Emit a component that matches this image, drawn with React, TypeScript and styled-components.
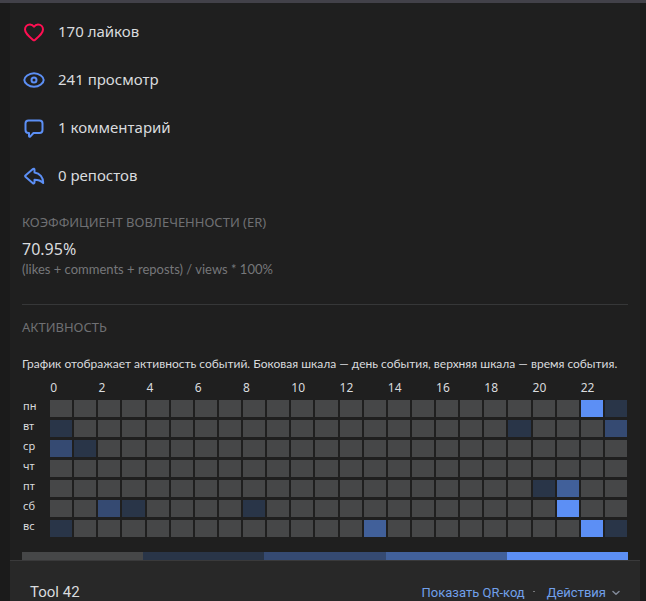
import React from "react";
import styled, { createGlobalStyle } from "styled-components";

const GlobalStyle = createGlobalStyle`
  * { box-sizing: border-box; }
  body {
    margin: 0;
    background: #1b1b1b;
    color: #d9dbde;
    font-family: "Noto Sans", sans-serif;
  }
`;

const LEVELS = ["#464748", "#293548", "#354a72", "#41609a", "#5c8ff5"];

const Page = styled.div`
  min-height: 100vh;
  display: flex;
  flex-direction: column;
  padding: 0 6px 0 10px;
  border-top: 3px solid #424149;
`;

const Panel = styled.main`
  flex: none;
  background: #1f1f1f;
  padding: 5px 12px 0;
`;

const StatList = styled.ul`
  list-style: none;
  margin: 0;
  padding: 0;
`;

const Stat = styled.li`
  display: flex;
  align-items: center;
  gap: 12px;
  height: 48px;
  font-size: 15px;
`;

const StatText = styled.span`
  padding-bottom: 2px;
`;

const StatIcon = styled.svg<{ $tone: string }>`
  flex: none;
  width: 24px;
  height: 24px;
  fill: none;
  stroke: ${(p) => p.$tone};
  stroke-width: 2;
  stroke-linecap: round;
  stroke-linejoin: round;
`;

const SectionTitle = styled.h2`
  margin: 0;
  color: #6f7073;
  font-size: 13px;
  font-weight: 400;
  line-height: 16px;
  text-transform: uppercase;
`;

const Rate = styled.section`
  padding: 14px 0 27px;
  border-bottom: 1px solid #363738;
`;

const RateValue = styled.div`
  margin-top: 7px;
  font-size: 16px;
  line-height: 24px;
`;

const RateFormula = styled.div`
  color: #76777a;
  font-family: Lato, sans-serif;
  font-size: 13px;
  line-height: 16px;
`;

const Activity = styled.section`
  padding-top: 14px;
`;

const Description = styled.p`
  margin: 21px 0 7px;
  font-family: Lato, sans-serif;
  font-size: 12px;
  line-height: 16px;
`;

const HeatTable = styled.table`
  display: grid;
  grid-template-columns: minmax(0, 13fr) repeat(24, minmax(0, 11fr));
  gap: 3px 2px;
  padding-right: 1px;

  thead, tbody, tr { display: contents; }
`;

const HourHead = styled.th`
  height: 18px;
  padding: 0;
  font-size: 12px;
  font-weight: 400;
  line-height: 18px;
  text-align: left;
  white-space: nowrap;
`;

const DayHead = styled.th`
  height: 17px;
  padding: 0 0 0 1px;
  font-size: 11px;
  font-weight: 400;
  line-height: 12px;
  text-align: left;
`;

const HeatCell = styled.td<{ $level: number }>`
  padding: 0;
  background: ${(p) => LEVELS[p.$level]};
`;

const Legend = styled.div`
  display: flex;
  margin-top: 15px;
`;

const LegendStep = styled.div<{ $level: number }>`
  flex: 1;
  height: 8px;
  background: ${(p) => LEVELS[p.$level]};
`;

const Footer = styled.footer`
  flex: 1;
  display: flex;
  align-items: flex-start;
  justify-content: space-between;
  padding: 21px 20px 0 20px;
  border-top: 1px solid #3a3a3b;
  background: #282828;
  font-family: Roboto, sans-serif;
  line-height: 20px;
`;

const ToolName = styled.span`
  font-size: 15px;
`;

const Actions = styled.div`
  display: flex;
  align-items: center;
  gap: 8px;
  padding-top: 1px;
  font-size: 13px;
`;

const QrLink = styled.a`
  color: #71a0eb;
  text-decoration: none;
`;

const Separator = styled.span`
  width: 2px;
  height: 1px;
  margin-bottom: 4px;
  background: #76787a;
`;

const ActionsButton = styled.button`
  display: flex;
  align-items: center;
  gap: 6px;
  margin-left: 4px;
  padding: 0;
  border: 0;
  background: none;
  color: #71a0eb;
  font: inherit;
  cursor: pointer;
`;

const Chevron = styled.svg`
  width: 8px;
  height: 6px;
  fill: none;
  stroke: #828a99;
  stroke-width: 1.500;
  stroke-linecap: round;
  stroke-linejoin: round;
`;

const BLUE = "#5c8ff5";

const stats = [
  {
    text: "170 лайков",
    tone: "#ff0f52",
    shape: (
      <path d="M8 4.500c1.600 0 3.100.9 4 2.200.9-1.300 2.400-2.200 4-2.200 2.900 0 5 2.100 5 4.900 0 3.800-3.500 6.600-8.100 10.500a1.400 1.400 0 0 1-1.800 0C6.500 16 3 13.200 3 9.400c0-2.800 2.100-4.900 5-4.900z" />
    ),
  },
  {
    text: "241 просмотр",
    tone: BLUE,
    shape: (
      <>
        <path d="M12 5.200c5.300 0 9.700 4 9.700 6.800s-4.400 6.800-9.700 6.800S2.300 14.800 2.300 12 6.700 5.200 12 5.200z" />
        <circle cx="12" cy="12" r="2.500" />
      </>
    ),
  },
  {
    text: "1 комментарий",
    tone: BLUE,
    shape: (
      <path d="M6.500 4.500h11a3 3 0 0 1 3 3v6.500a3 3 0 0 1-3 3h-6l-3.300 3.600c-.5.500-1.200.2-1.200-.5V17h-.5a3 3 0 0 1-3-3V7.500a3 3 0 0 1 3-3z" />
    ),
  },
  {
    text: "0 репостов",
    tone: BLUE,
    shape: (
      <path d="M12.500 8.500V5.700c0-1-.9-1.300-1.600-.7l-7.500 6.500a.8.8 0 0 0 0 1.200l7.500 6.500c.7.600 1.600.2 1.600-.7v-2.700c3.600 0 6.200.8 8.700 3.200.2-5.500-3.500-9.800-8.700-10.500z" />
    ),
  },
];

const days: { name: string; hits: Record<number, number> }[] = [
  { name: "пн", hits: { 22: 4, 23: 1 } },
  { name: "вт", hits: { 0: 1, 19: 1, 23: 2 } },
  { name: "ср", hits: { 0: 2, 1: 1 } },
  { name: "чт", hits: {} },
  { name: "пт", hits: { 20: 1, 21: 3 } },
  { name: "сб", hits: { 2: 2, 3: 1, 8: 1, 21: 4 } },
  { name: "вс", hits: { 0: 1, 13: 3, 22: 4, 23: 1 } },
];

const hours = Array.from({ length: 24 }, (_, hour) => hour);

export default function App() {
  return (
    <>
      <GlobalStyle />
      <Page>
        <Panel>
          <StatList>
            {stats.map((stat) => (
              <Stat key={stat.text}>
                <StatIcon viewBox="0 0 24 24" $tone={stat.tone} aria-hidden="true">
                  {stat.shape}
                </StatIcon>
                <StatText>{stat.text}</StatText>
              </Stat>
            ))}
          </StatList>
          <Rate>
            <SectionTitle>Коэффициент вовлеченности (ER)</SectionTitle>
            <RateValue>70.95%</RateValue>
            <RateFormula>(likes + comments + reposts) / views * 100%</RateFormula>
          </Rate>
          <Activity>
            <SectionTitle>Активность</SectionTitle>
            <Description>
              График отображает активность событий. Боковая шкала — день события, верхняя шкала — время события.
            </Description>
            <HeatTable>
              <thead>
                <tr>
                  <HourHead as="td" />
                  {hours.map((hour) => (
                    <HourHead key={hour} scope="col">
                      {hour % 2 === 0 ? hour : null}
                    </HourHead>
                  ))}
                </tr>
              </thead>
              <tbody>
                {days.map((day) => (
                  <tr key={day.name}>
                    <DayHead scope="row">{day.name}</DayHead>
                    {hours.map((hour) => (
                      <HeatCell key={hour} $level={day.hits[hour] ?? 0} />
                    ))}
                  </tr>
                ))}
              </tbody>
            </HeatTable>
            <Legend>
              {LEVELS.map((color, level) => (
                <LegendStep key={color} $level={level} />
              ))}
            </Legend>
          </Activity>
        </Panel>
        <Footer>
          <ToolName>Tool 42</ToolName>
          <Actions>
            <QrLink href="#qr">Показать QR-код</QrLink>
            <Separator />
            <ActionsButton type="button">
              Действия
              <Chevron viewBox="0 0 8 6" aria-hidden="true">
                <path d="M1 1.500 4 4.200l3-2.700" />
              </Chevron>
            </ActionsButton>
          </Actions>
        </Footer>
      </Page>
    </>
  );
}
